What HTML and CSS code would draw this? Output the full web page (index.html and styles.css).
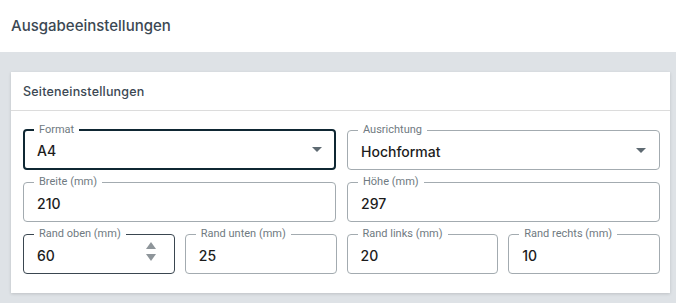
FILE: index.html
```html
<!DOCTYPE html>
<html lang="de">

<head>
    <meta charset="UTF-8">
    <meta name="viewport" content="width=device-width, initial-scale=1.0">
    <title>Ausgabeeinstellungen</title>
    <link rel="stylesheet" href="styles.css">
</head>

<body>
    <div class="page-header">Ausgabeeinstellungen</div>

    <div class="content">
        <div class="card">
            <div class="card-title">Seiteneinstellungen</div>
            <div class="card-body">
                <div class="row two">
                    <fieldset class="field focused">
                        <legend>Format</legend>
                        <div class="value">A4<span class="arrow"></span></div>
                    </fieldset>
                    <fieldset class="field">
                        <legend>Ausrichtung</legend>
                        <div class="value">Hochformat<span class="arrow"></span></div>
                    </fieldset>
                </div>
                <div class="row two">
                    <fieldset class="field">
                        <legend>Breite (mm)</legend>
                        <div class="value">210</div>
                    </fieldset>
                    <fieldset class="field">
                        <legend>Höhe (mm)</legend>
                        <div class="value">297</div>
                    </fieldset>
                </div>
                <div class="row four">
                    <fieldset class="field hover">
                        <legend>Rand oben (mm)</legend>
                        <div class="value">60
                            <span class="spin">
                                <span class="up"></span>
                                <span class="down"></span>
                            </span>
                        </div>
                    </fieldset>
                    <fieldset class="field">
                        <legend>Rand unten (mm)</legend>
                        <div class="value">25</div>
                    </fieldset>
                    <fieldset class="field">
                        <legend>Rand links (mm)</legend>
                        <div class="value">20</div>
                    </fieldset>
                    <fieldset class="field">
                        <legend>Rand rechts (mm)</legend>
                        <div class="value">10</div>
                    </fieldset>
                </div>
            </div>
        </div>
    </div>
</body>

</html>
```

FILE: styles.css
```css
body {
    margin: 0;
    background-color: #dee2e6;
    font-family: Inter, "Open Sans", sans-serif;
    color: #161616;
}

.page-header {
    height: 52px;
    background-color: #ffffff;
    padding-left: 11px;
    line-height: 52px;
    font-size: 15px;
    font-weight: 500;
    color: #3b4853;
}

.content {
    padding: 20px 6px 10px 11px;
}

.card {
    background-color: #ffffff;
    box-shadow: 0 1px 3px rgba(0, 0, 0, 0.15);
}

.card-title {
    height: 38px;
    line-height: 40px;
    padding-left: 12px;
    font-size: 12.5px;
    font-weight: 500;
    color: #3b4853;
    letter-spacing: 0.2px;
    border-bottom: 1px solid #dcdcdc;
}

.card-body {
    padding: 13px 10px 19px 12px;
    display: flex;
    flex-direction: column;
    gap: 6px;
}

.row {
    display: grid;
    column-gap: 11px;
}

.row.two {
    grid-template-columns: 1fr 1fr;
}

.row.four {
    grid-template-columns: 1fr 1fr 1fr 1fr;
    column-gap: 10px;
}

.field {
    margin: 0;
    min-width: 0;
    padding: 0 0 0 10px;
    border: 1px solid #a3abb0;
    border-radius: 4px;
}

.field legend {
    padding: 0 5px;
    font-family: Roboto, sans-serif;
    font-size: 11px;
    line-height: 12px;
    color: #6f7a81;
}

.field.focused {
    border: 2px solid #0f2733;
    padding-left: 9px;
}

.field.focused .value {
    height: 32px;
    line-height: 30px;
    padding-right: 12px;
}

.field.hover {
    border-color: #3a4650;
}

.value {
    position: relative;
    height: 33px;
    line-height: 32px;
    padding-left: 3px;
    padding-right: 13px;
    font-size: 14px;
    font-weight: 500;
    color: #1c1c1c;
}

.arrow {
    position: absolute;
    right: 13px;
    top: 12px;
    width: 0;
    height: 0;
    border-left: 5px solid transparent;
    border-right: 5px solid transparent;
    border-top: 5px solid #5e6a72;
}

.field.focused .arrow {
    right: 12px;
    top: 11px;
}

.spin {
    position: absolute;
    right: 18px;
    top: 2px;
    display: flex;
    flex-direction: column;
    gap: 5px;
}

.spin .up {
    width: 0;
    height: 0;
    border-left: 5px solid transparent;
    border-right: 5px solid transparent;
    border-bottom: 7px solid #8e959a;
}

.spin .down {
    width: 0;
    height: 0;
    border-left: 5px solid transparent;
    border-right: 5px solid transparent;
    border-top: 7px solid #8e959a;
}
```
